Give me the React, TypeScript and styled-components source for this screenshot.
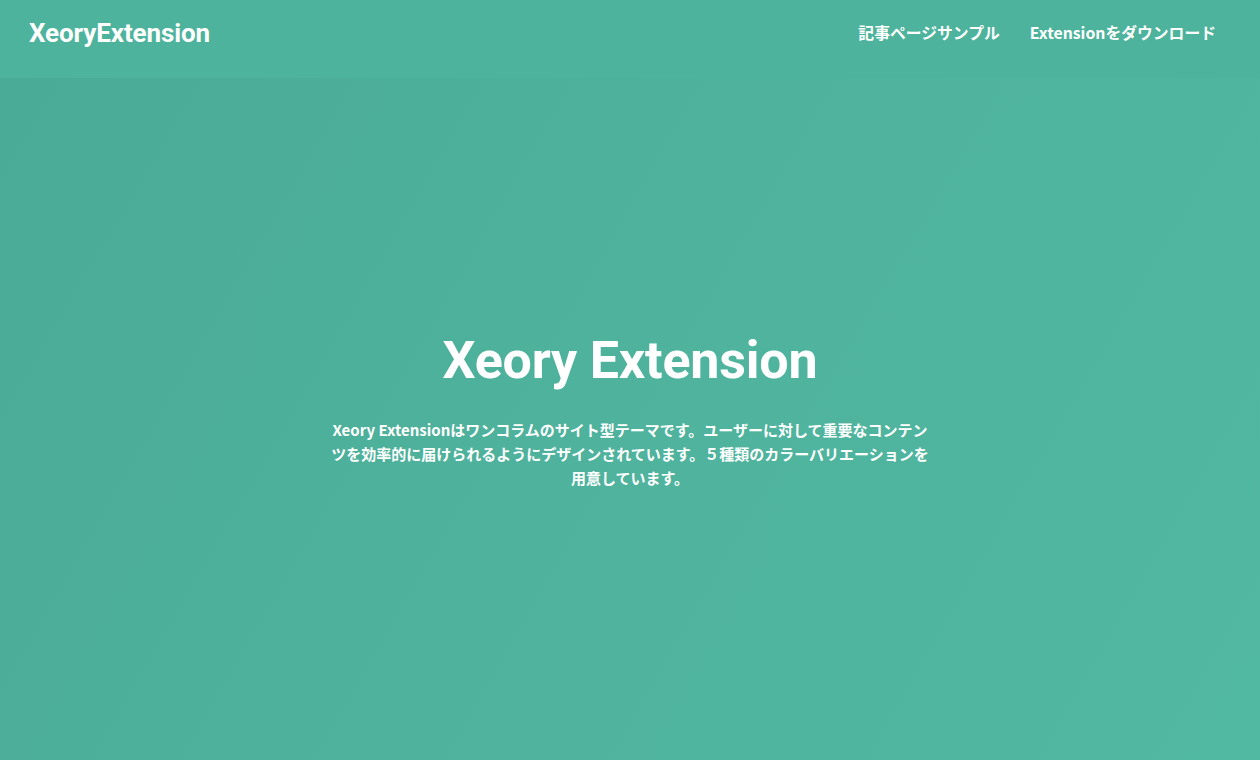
import React from "react";
import styled, { createGlobalStyle } from "styled-components";

const Global = createGlobalStyle`
  html, body { margin: 0; padding: 0; }
  body {
    font-family: Roboto, "Noto Sans CJK JP", sans-serif;
    color: #fff;
    -webkit-font-smoothing: antialiased;
  }
  * { box-sizing: border-box; }
`;

const Page = styled.div`
  width: 100%;
  height: 760px;
  display: flex;
  flex-direction: column;
  background: linear-gradient(120deg, #4aab96 0%, #4fb39d 55%, #51b8a2 100%);
`;

const Header = styled.header`
  height: 78px;
  flex: none;
  display: flex;
  align-items: center;
  justify-content: space-between;
  padding: 0 44px 0 29px;
  background: #4db39c;
`;

const Logo = styled.a`
  font-family: Roboto, sans-serif;
  font-weight: 700;
  font-size: 26px;
  letter-spacing: -0.1px;
  color: #fff;
  text-decoration: none;
  margin-top: -12px;
`;

const Nav = styled.nav`
  display: flex;
  gap: 30px;
  margin-top: -13px;
`;

const NavLink = styled.a`
  font-family: "Noto Sans CJK JP", sans-serif;
  font-weight: 700;
  font-size: 15.8px;
  color: #fff;
  text-decoration: none;
`;

const Hero = styled.section`
  flex: 1;
  display: flex;
  flex-direction: column;
  align-items: center;
  justify-content: center;
  padding-bottom: 18px;
`;

const Title = styled.h1`
  margin: 0;
  font-family: Roboto, sans-serif;
  font-weight: 700;
  font-size: 52px;
  line-height: 1.2;
  letter-spacing: -0.2px;
`;

const Lead = styled.p`
  margin: 26px 0 0;
  width: 604px;
  text-align: center;
  font-family: "Noto Sans CJK JP", sans-serif;
  font-weight: 700;
  font-size: 15px;
  line-height: 24px;
`;

export default function App() {
  return (
    <>
      <Global />
      <Page>
        <Header>
          <Logo href="#">XeoryExtension</Logo>
          <Nav>
            <NavLink href="#">記事ページサンプル</NavLink>
            <NavLink href="#">Extensionをダウンロード</NavLink>
          </Nav>
        </Header>
        <Hero>
          <Title>Xeory Extension</Title>
          <Lead>
            Xeory Extensionはワンコラムのサイト型テーマです。ユーザーに対して重要なコンテンツを効率的に届けられるようにデザインされています。５種類のカラーバリエーションを用意しています。
          </Lead>
        </Hero>
      </Page>
    </>
  );
}
